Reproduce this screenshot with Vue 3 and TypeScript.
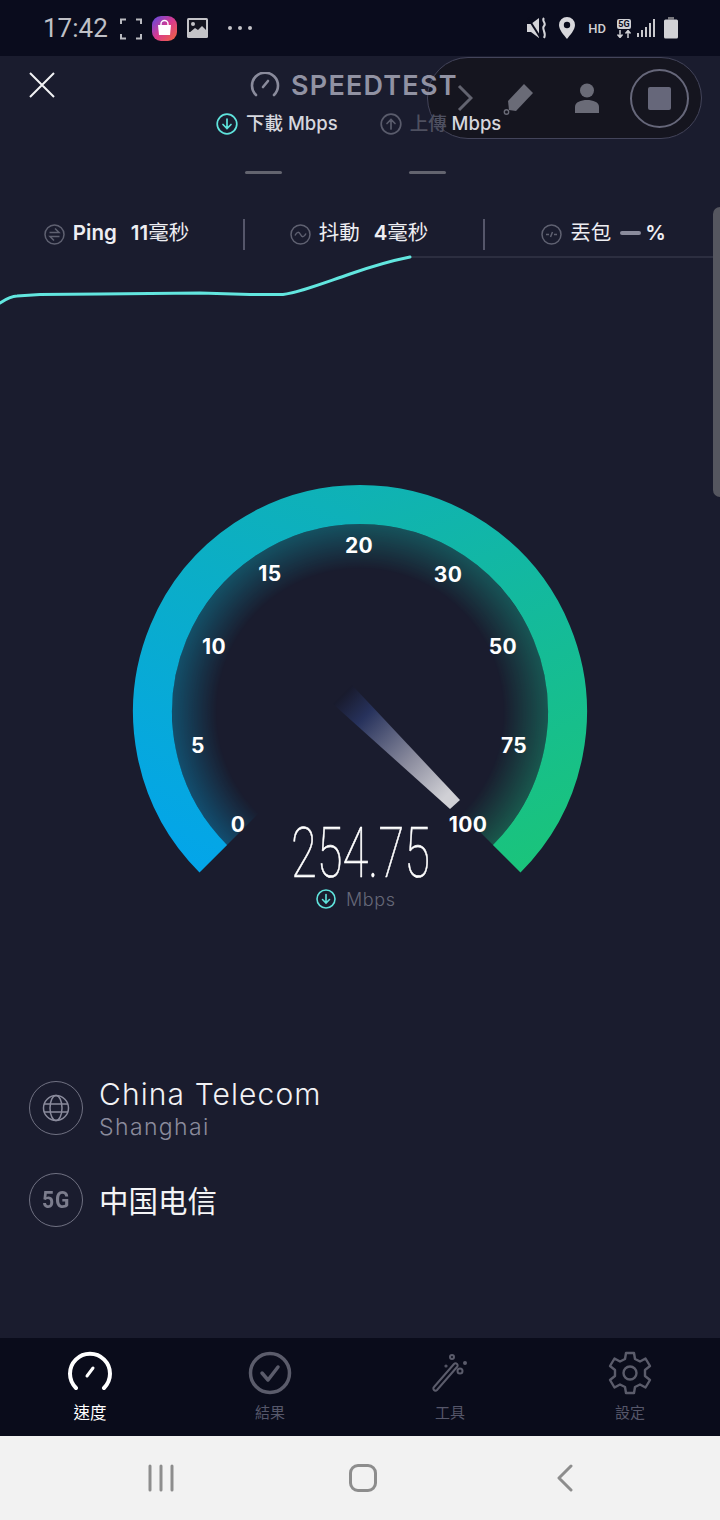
<script setup lang="ts">
type Tick = { label: string; x: number; y: number };

const ticks: Tick[] = [
  { label: "0", x: 238, y: 354 },
  { label: "5", x: 198, y: 275 },
  { label: "10", x: 214, y: 176 },
  { label: "15", x: 270, y: 103 },
  { label: "20", x: 359, y: 75 },
  { label: "30", x: 448, y: 104 },
  { label: "50", x: 503, y: 176 },
  { label: "75", x: 514, y: 275 },
  { label: "100", x: 468, y: 354 },
];

const curve =
  "M0 303 C6 299 11 296 17 296 L40 294.500 L100 294 L200 293 L250 294.500 L283 294.500 C300 292 315 286 350 274 C370 267 390 261 410 257";
</script>

<template>
  <div class="screen">
    <div class="status">
      <span class="clock">17:42</span>
      <svg class="st-frame" width="22" height="22" viewBox="0 0 22 22" fill="none" stroke="#b9bac0" stroke-width="2">
        <path d="M1 6V1.500H6M16 1.500H21V6M1 16V20.500H6M16 20.500H21V16" />
      </svg>
      <svg class="st-bag" width="25" height="25" viewBox="0 0 25 25">
        <defs>
          <linearGradient id="bagGrad" x1="0" y1="0" x2="1" y2="1">
            <stop offset="0" stop-color="#5a4be6" />
            <stop offset="0.5" stop-color="#d83a8e" />
            <stop offset="1" stop-color="#f2683a" />
          </linearGradient>
        </defs>
        <rect width="25" height="25" rx="9" fill="url(#bagGrad)" />
        <path d="M6 9H19L18 19H7Z" fill="#fff" />
        <path d="M9 10V8A3.500 3.500 0 0 1 16 8V10" fill="none" stroke="#fff" stroke-width="1.400" />
      </svg>
      <svg class="st-image" width="21" height="20" viewBox="0 0 21 20">
        <rect width="21" height="20" rx="1.500" fill="#c4c4c8" />
        <rect x="2" y="2" width="17" height="12" fill="#14151f" />
        <circle cx="6" cy="6" r="2" fill="#c4c4c8" />
        <path d="M2 15L8 10L11 12L15 8L19 12V18H2Z" fill="#c4c4c8" />
      </svg>
      <span class="st-dots"><i></i><i></i><i></i></span>
      <span class="st-spacer"></span>
      <svg class="st-mute" width="22" height="22" viewBox="0 0 22 22" fill="#d4d4d8">
        <path d="M0 7H4L12 1V21L4 15H0Z" />
        <path d="M1 1L13 20" stroke="#0a0c1d" stroke-width="2" />
        <path d="M17 1C14 4 20 6 17 9C14 12 20 15 17 21" fill="none" stroke="#d4d4d8" stroke-width="2" />
      </svg>
      <svg class="st-pin" width="16" height="22" viewBox="0 0 16 22">
        <path d="M8 0A8 8 0 0 1 16 8C16 13 11 18 8 22C5 18 0 13 0 8A8 8 0 0 1 8 0Z" fill="#d8d8dc" />
        <circle cx="8" cy="8" r="3.200" fill="#0a0c1d" />
      </svg>
      <span class="st-hd">HD</span>
      <span class="st-net">
        <b>5G</b>
        <svg width="16" height="8" viewBox="0 0 16 8" fill="none" stroke="#d0d0d4" stroke-width="1.500">
          <path d="M4 0V7M1.500 4.500L4 7.500L6.500 4.500M12 8V1M9.500 3.500L12 .5L14.500 3.500" />
        </svg>
      </span>
      <svg class="st-signal" width="19" height="20" viewBox="0 0 19 20" fill="#c8c8cc">
        <rect x="0" y="15" width="2" height="4" />
        <rect x="4" y="12" width="2" height="7" />
        <rect x="8" y="9" width="2" height="10" />
        <rect x="12" y="5" width="2" height="14" />
        <rect x="16" y="1" width="2" height="18" />
      </svg>
      <svg class="st-batt" width="14" height="22" viewBox="0 0 14 22" fill="#d2d2d6">
        <rect x="4" y="0" width="6" height="2.500" fill="#77777c" />
        <rect x="0" y="2.500" width="14" height="19" rx="1.500" />
      </svg>
    </div>

    <main class="main">
      <header class="title-row">
        <svg class="close" width="28" height="28" viewBox="0 0 28 28" stroke="#f2f2f4" stroke-width="2">
          <path d="M2 2L26 26M26 2L2 26" />
        </svg>
        <svg width="30" height="26" viewBox="0 0 30 26" fill="none" stroke="#8a8b9c" stroke-width="2.600" stroke-linecap="round">
          <path d="M6 23A13 13 0 1 1 24 23" />
          <path d="M13 15L18 9" />
        </svg>
        <span class="title">SPEEDTEST</span>
      </header>

      <div class="units">
        <div class="unit">
          <svg width="22" height="22" viewBox="0 0 22 22" fill="none" stroke="#5fe3dc" stroke-width="1.700" stroke-linecap="round">
            <circle cx="11" cy="11" r="9.800" />
            <path d="M11 6V15.500M7 11.500L11 15.500L15 11.500" />
          </svg>
          <span class="unit-text">下載 Mbps</span>
        </div>
        <div class="unit">
          <svg width="22" height="22" viewBox="0 0 22 22" fill="none" stroke="#5a5c6c" stroke-width="1.700" stroke-linecap="round">
            <circle cx="11" cy="11" r="9.800" />
            <path d="M11 16V6.500M7 10.500L11 6.500L15 10.500" />
          </svg>
          <span class="unit-text"><span class="dim">上傳</span> Mbps</span>
        </div>
      </div>

      <div class="dashes"><i></i><i></i></div>

      <div class="stats">
        <div class="stat first">
          <svg width="21" height="21" viewBox="0 0 21 21" fill="none" stroke="#5f6171" stroke-width="1.500">
            <circle cx="10.500" cy="10.500" r="9.500" />
            <path d="M5.500 8.500H15L11 4.500M15.500 12.500H6L10 16.500" />
          </svg>
          <span class="stat-text"><b>Ping</b><b class="val">11</b>毫秒</span>
        </div>
        <div class="stat middle">
          <svg width="21" height="21" viewBox="0 0 21 21" fill="none" stroke="#5f6171" stroke-width="1.500">
            <circle cx="10.500" cy="10.500" r="9.500" />
            <path d="M5 11.500C7 7.500 9 7.500 10.500 10.500C12 13.500 14 13.500 16 9.500" />
          </svg>
          <span class="stat-text">抖動<b class="val">4</b>毫秒</span>
        </div>
        <div class="stat last">
          <svg width="21" height="21" viewBox="0 0 21 21" fill="none" stroke="#5f6171" stroke-width="1.500">
            <circle cx="10.500" cy="10.500" r="9.500" />
            <path d="M5 10.500H8M13 10.500H16M9.500 13L11.500 8" />
          </svg>
          <span class="stat-text">丟包<span class="dash-val"></span><b>%</b></span>
        </div>
      </div>

      <svg class="chart" width="720" height="60" viewBox="0 250 720 60" fill="none">
        <path d="M410 257H720" stroke="#3f4152" stroke-width="1" />
        <path :d="curve" stroke="#62e6df" stroke-width="3" stroke-linecap="round" />
      </svg>

      <svg class="gauge" width="720" height="450" viewBox="0 0 720 450">
        <defs>
          <linearGradient id="arcLeft" gradientUnits="userSpaceOnUse" x1="199" y1="402" x2="360" y2="15">
            <stop offset="0" stop-color="#03a5ea" />
            <stop offset="1" stop-color="#0fb2b5" />
          </linearGradient>
          <linearGradient id="arcRight" gradientUnits="userSpaceOnUse" x1="360" y1="15" x2="521" y2="402">
            <stop offset="0" stop-color="#0fb2b5" />
            <stop offset="1" stop-color="#1ac47b" />
          </linearGradient>
          <radialGradient id="glowGrad" gradientUnits="userSpaceOnUse" cx="360" cy="242" r="188">
            <stop offset="0.76" stop-color="#000" />
            <stop offset="1" stop-color="#5c5c5c" />
          </radialGradient>
          <mask id="glowMask" maskUnits="userSpaceOnUse" x="0" y="0" width="720" height="450">
            <rect width="720" height="450" fill="url(#glowGrad)" />
          </mask>
          <linearGradient id="needleGrad" gradientUnits="userSpaceOnUse" x1="342" y1="225" x2="455" y2="335">
            <stop offset="0" stop-color="#181a2c" />
            <stop offset="0.2" stop-color="#27325c" />
            <stop offset="0.6" stop-color="#8b8c9e" />
            <stop offset="0.92" stop-color="#d0d0d5" />
          </linearGradient>
        </defs>
        <g mask="url(#glowMask)">
          <path d="M227 375A188 188 0 0 1 360 54V242Z" fill="url(#arcLeft)" />
          <path d="M360 54A188 188 0 0 1 493 375L360 242Z" fill="url(#arcRight)" />
        </g>
        <path d="M213.300 388.700A207.500 207.500 0 0 1 360.500 34.500" fill="none" stroke="url(#arcLeft)" stroke-width="39" />
        <path d="M360 34.500A207.500 207.500 0 0 1 506.700 388.700" fill="none" stroke="url(#arcRight)" stroke-width="39" />
        <polygon points="352,215 333,234 450,339 460,330" fill="url(#needleGrad)" />
        <text
          v-for="t in ticks"
          :key="t.label"
          class="tick"
          :x="t.x"
          :y="t.y + 7.500"
          text-anchor="middle"
        >
          {{ t.label }}
        </text>
        <text class="speed" x="291" y="407" textLength="139" lengthAdjust="spacingAndGlyphs">254.75</text>
        <g transform="translate(316 419)" fill="none" stroke="#5fe3dc" stroke-width="1.600" stroke-linecap="round">
          <circle cx="10" cy="10" r="9" />
          <path d="M10 5.500V14M6.500 10.500L10 14L13.500 10.500" />
        </g>
        <text class="speed-unit" x="346" y="435.500">Mbps</text>
      </svg>

      <section class="server">
        <div class="server-row">
          <span class="ring">
            <svg width="28" height="28" viewBox="0 0 28 28" fill="none" stroke="#8a8b9c" stroke-width="1.500">
              <circle cx="14" cy="14" r="12.500" />
              <ellipse cx="14" cy="14" rx="6" ry="12.500" />
              <path d="M2 10H26M2 18H26" />
            </svg>
          </span>
          <div class="server-text">
            <div class="server-name">China Telecom</div>
            <div class="server-city">Shanghai</div>
          </div>
        </div>
        <div class="server-row">
          <span class="ring"><span class="ring-5g">5G</span></span>
          <div class="carrier">中国电信</div>
        </div>
      </section>

      <div class="pill">
        <svg class="pill-chevron" width="16" height="28" viewBox="0 0 16 28" fill="none" stroke="#62636f" stroke-width="3">
          <path d="M2 2L14 14L2 26" />
        </svg>
        <svg class="pill-pen" width="34" height="34" viewBox="0 0 34 34" fill="#6a6b77">
          <path d="M23 2L32 11L15 29L8 28L7 19Z" />
          <circle cx="5.500" cy="30" r="2.200" fill="none" stroke="#6a6b77" stroke-width="1.400" />
        </svg>
        <svg class="pill-user" width="24" height="30" viewBox="0 0 24 30" fill="#6a6b77">
          <circle cx="12" cy="7.500" r="7" />
          <path d="M0 30V24C0 19 6 17 12 17C18 17 24 19 24 24V30Z" />
        </svg>
        <span class="pill-stop"><i></i></span>
      </div>

      <div class="scroll-handle"></div>
    </main>

    <nav class="tabs">
      <div class="tab active">
        <svg width="44" height="44" viewBox="0 0 44 44" fill="none" stroke="#fff" stroke-width="4" stroke-linecap="round">
          <path d="M8 37A20 20 0 1 1 36 37" />
          <path d="M19 25L25 17" stroke-width="3" />
        </svg>
        <span>速度</span>
      </div>
      <div class="tab">
        <svg width="44" height="44" viewBox="0 0 44 44" fill="none" stroke="#5b5c6b" stroke-width="3.500" stroke-linecap="round" stroke-linejoin="round">
          <circle cx="22" cy="22" r="19.500" />
          <path d="M14 22L20 29L30 16" />
        </svg>
        <span>結果</span>
      </div>
      <div class="tab">
        <svg width="44" height="44" viewBox="0 0 44 44" fill="none" stroke="#5b5c6b" stroke-width="2" stroke-linecap="round" stroke-linejoin="round">
          <path d="M6 36L26 13C28 11 31 14 29 16L9 39C7 41 4 38 6 36Z" />
          <circle cx="24" cy="6" r="2" />
          <circle cx="32" cy="20" r="2.500" />
          <circle cx="37" cy="12" r="1" fill="#5b5c6b" />
          <circle cx="18" cy="15" r=".6" fill="#5b5c6b" />
        </svg>
        <span>工具</span>
      </div>
      <div class="tab">
        <svg width="44" height="44" viewBox="0 0 44 44" fill="none" stroke="#5b5c6b" stroke-width="2.400" stroke-linejoin="round">
          <path d="M18 2H26L27 8L32 10.500L37.500 7.500L42 15L37 19V25L42 29L37.500 36.500L32 33.500L27 36L26 42H18L17 36L12 33.500L6.500 36.500L2 29L7 25V19L2 15L6.500 7.500L12 10.500L17 8Z" />
          <circle cx="22" cy="22" r="6.500" />
        </svg>
        <span>設定</span>
      </div>
    </nav>

    <footer class="sysnav">
      <svg width="28" height="28" viewBox="0 0 28 28" stroke="#8d8d8d" stroke-width="3" stroke-linecap="round">
        <path d="M3 2V26M14 2V26M25 2V26" />
      </svg>
      <span class="sys-home"></span>
      <svg width="20" height="28" viewBox="0 0 20 28" fill="none" stroke="#8d8d8d" stroke-width="3" stroke-linecap="round" stroke-linejoin="round">
        <path d="M16 2L4 14L16 26" />
      </svg>
    </footer>
  </div>
</template>

<style>
html,
body {
  margin: 0;
  background: #1a1c2e;
}
</style>

<style scoped>
.screen {
  width: 720px;
  height: 1520px;
  display: flex;
  flex-direction: column;
  overflow: hidden;
  background: #1a1c2e;
  color: #fff;
  font-family: "Inter", "Noto Sans CJK TC", sans-serif;
}

.status {
  height: 56px;
  flex: none;
  display: flex;
  align-items: center;
  padding: 0 42px 0 43px;
  background: #0a0c1d;
}

.clock {
  font-family: "Roboto", sans-serif;
  font-size: 26px;
  color: #bfc0c6;
  width: 63px;
}

.st-frame {
  margin-left: 14px;
  margin-top: 1px;
}

.st-bag {
  margin-left: 10px;
}

.st-image {
  margin-left: 10px;
}

.st-dots {
  margin-left: 20px;
  display: flex;
  gap: 6px;
}

.st-dots i {
  width: 4px;
  height: 4px;
  border-radius: 50%;
  background: #c4c4c8;
}

.st-spacer {
  flex: 1;
}

.st-pin {
  margin-left: 10px;
}

.st-hd {
  margin-left: 13px;
  font-family: "Roboto", sans-serif;
  font-size: 13px;
  font-weight: 500;
  color: #d0d0d4;
}

.st-net {
  margin-left: 10px;
  display: flex;
  flex-direction: column;
  align-items: center;
  gap: 1px;
}

.st-net b {
  font-family: "Roboto", sans-serif;
  font-size: 9px;
  line-height: 10px;
  padding: 0 1px;
  border-radius: 2px;
  background: #d0d0d4;
  color: #0a0c1d;
}

.st-signal {
  margin-left: 5px;
}

.st-batt {
  margin-left: 8px;
}

.main {
  flex: 1;
  position: relative;
  min-height: 0;
}

.title-row {
  height: 58px;
  display: flex;
  align-items: center;
  padding-left: 250px;
  gap: 11px;
  position: relative;
  z-index: 1;
}

.close {
  position: absolute;
  left: 28px;
  top: 15px;
}

.title {
  font-size: 27px;
  font-weight: 600;
  letter-spacing: 1.2px;
  color: #9192a3;
}

.units {
  height: 20px;
  display: flex;
  align-items: center;
  gap: 42px;
  padding-left: 216px;
  position: relative;
  z-index: 1;
}

.unit {
  display: flex;
  align-items: center;
  gap: 8px;
}

.unit-text {
  font-size: 18.5px;
  line-height: 20px;
  font-weight: 500;
  color: #d6d7de;
  white-space: nowrap;
  margin-top: -2px;
}

.dim {
  color: #4e5060;
}

.dashes {
  display: flex;
  gap: 127px;
  padding-left: 245px;
  margin-top: 37px;
}

.dashes i {
  width: 37px;
  height: 3px;
  border-radius: 2px;
  background: #63646f;
}

.stats {
  display: flex;
  height: 31px;
  margin-top: 45px;
}

.stat {
  display: flex;
  align-items: center;
  justify-content: center;
  gap: 8px;
  flex: none;
  width: 240px;
  border-left: 2px solid #55566a;
  box-sizing: border-box;
}

.stat.first {
  width: 243px;
  border-left: 0;
  padding-right: 10px;
}

.stat.middle {
  padding-right: 10px;
}

.stat.last {
  width: 237px;
  padding-left: 2px;
}

.stat-text {
  font-size: 20.5px;
  line-height: 24px;
  color: #eeeef2;
  white-space: nowrap;
  display: flex;
  align-items: center;
  margin-top: -3px;
}

.stat-text b {
  font-weight: 600;
}

.stat-text .val {
  margin-left: 14px;
}

.dash-val {
  display: inline-block;
  width: 21px;
  height: 4px;
  margin: 0 4px 0 9px;
  border-radius: 2px;
  background: #8a8b9c;
}

.chart,
.gauge {
  display: block;
}

.gauge {
  margin-top: 160px;
}

.tick {
  font-family: "Inter", sans-serif;
  font-size: 21px;
  font-weight: 700;
  letter-spacing: 0.4px;
  fill: #fff;
}

.speed {
  font-family: "Roboto", sans-serif;
  font-size: 70px;
  font-weight: 100;
  fill: #fff;
  stroke: #fff;
  stroke-width: 0.6px;
}

.speed-unit {
  font-family: "Inter", sans-serif;
  font-size: 18px;
  font-weight: 300;
  letter-spacing: 0.6px;
  fill: #666878;
}

.server {
  margin-top: 161px;
  padding-left: 29px;
  display: flex;
  flex-direction: column;
  gap: 38px;
}

.server-row {
  height: 54px;
  display: flex;
  align-items: center;
  gap: 16px;
}

.ring {
  width: 54px;
  height: 54px;
  flex: none;
  box-sizing: border-box;
  border: 1.5px solid #707182;
  border-radius: 50%;
  display: flex;
  align-items: center;
  justify-content: center;
}

.ring-5g {
  font-family: "Roboto", sans-serif;
  font-size: 24px;
  font-weight: 700;
  letter-spacing: 1px;
  color: #7c7d8d;
  transform: scaleX(0.88);
}

.server-text {
  margin-top: 2px;
}

.server-name {
  font-family: "Inter", sans-serif;
  font-size: 30px;
  font-weight: 300;
  letter-spacing: 1.1px;
  line-height: 34px;
  color: #f2f2f5;
}

.server-city {
  font-family: "Inter", sans-serif;
  font-size: 23px;
  font-weight: 300;
  letter-spacing: 1.4px;
  line-height: 28px;
  margin-top: 2px;
  color: #8a8b9c;
}

.carrier {
  font-family: "Noto Sans CJK SC", sans-serif;
  font-size: 29.5px;
  line-height: 40px;
  margin-top: -3px;
  color: #f4f4f6;
}

.pill {
  position: absolute;
  left: 427px;
  top: 1px;
  width: 275px;
  height: 82px;
  box-sizing: border-box;
  border: 1.5px solid #43445a;
  border-radius: 41px;
  background: #15151f;
}

.pill-chevron {
  position: absolute;
  left: 29px;
  top: 26px;
}

.pill-pen {
  position: absolute;
  left: 73px;
  top: 24px;
}

.pill-user {
  position: absolute;
  left: 147px;
  top: 25px;
}

.pill-stop {
  position: absolute;
  left: 202px;
  top: 11px;
  width: 59px;
  height: 59px;
  box-sizing: border-box;
  border: 2px solid #66677a;
  border-radius: 50%;
  display: flex;
  align-items: center;
  justify-content: center;
}

.pill-stop i {
  width: 23px;
  height: 23px;
  border-radius: 2px;
  background: #66677a;
}

.scroll-handle {
  position: absolute;
  right: 0;
  top: 151px;
  width: 7px;
  height: 290px;
  border-radius: 7px 0 0 7px;
  background: #55565f;
}

.tabs {
  height: 98px;
  flex: none;
  display: flex;
  background: #0a0c1b;
}

.tab {
  flex: 1;
  display: flex;
  flex-direction: column;
  align-items: center;
  padding-top: 13px;
  font-size: 15px;
  color: #56576a;
}

.tab.active {
  color: #fff;
  font-size: 16.5px;
}

.tab span {
  margin-top: 7px;
  line-height: 22px;
}

.sysnav {
  height: 84px;
  flex: none;
  display: flex;
  align-items: center;
  padding-left: 147px;
  background: #f2f2f2;
}

.sys-home {
  width: 28px;
  height: 28px;
  margin-left: 174px;
  box-sizing: border-box;
  border: 3px solid #8d8d8d;
  border-radius: 9px;
}

.sysnav svg:last-child {
  margin-left: 178px;
}
</style>
